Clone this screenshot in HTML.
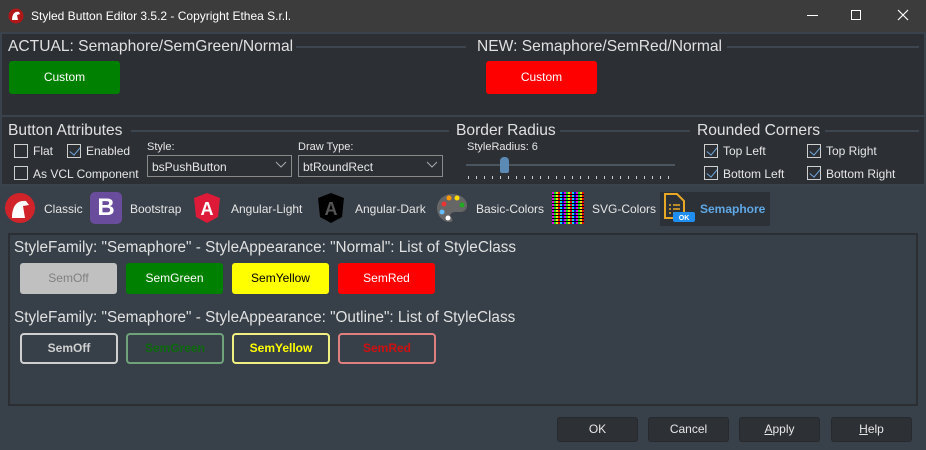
<!DOCTYPE html>
<html><head><meta charset="utf-8"><style>
*{margin:0;padding:0;box-sizing:border-box}
body{width:926px;height:450px;background:#384049;font-family:"Liberation Sans",sans-serif;color:#e6e6e6;position:relative;overflow:hidden;font-size:12px}
.a{position:absolute}
.title{left:0;top:0;width:926px;height:32px;background:#3c3c3c;color:#fff;font-size:12px}
.top{left:0;top:32px;width:926px;height:154px;background:#2c2f34;border:2px solid #3a424b;border-top:none}
.hd{font-size:15.6px;color:#e0e0e0;white-space:nowrap}
.line{height:2px;background:#3d454e}
.btn{border-radius:3px;text-align:center;font-size:12px}
.cb{width:14px;height:14px;border:1px solid #d0d0d0}
.cb.on::after{content:"";position:absolute;left:4px;top:0px;width:5px;height:9px;border:solid #6fa8dc;border-width:0 1.5px 1.5px 0;transform:rotate(40deg)}
.lbl{font-size:12px;color:#e6e6e6;white-space:nowrap}
.combo{height:22px;border:1px solid #8a8a8a;background:#2c2f34;font-size:12px;padding:4px 4px}
.tab{font-size:12px;color:#e6e6e6}
.panel{left:8px;top:233px;width:910px;height:173px;background:#374049;border:2px solid #2b2f34}
.ob{height:31px;border-radius:4px;border:2px solid;text-align:center;line-height:27px;font-weight:bold;font-size:12px;background:#374049}
.nb{height:31px;border-radius:3px;text-align:center;line-height:31px;font-size:12px}
.bb{top:417px;height:25px;width:81px;background:#2d3035;border:1px solid #262a2e;border-radius:3px;text-align:center;line-height:23px;font-size:12px}
</style></head><body>
<div class="a title">
 <svg class="a" style="left:8px;top:8px" width="16" height="16"><circle cx="8" cy="8" r="7.5" fill="#b01818"/><path d="M4 12 C4 6 7 3 11 4 L12 6 L9 7 L10 12 Z" fill="#fff"/></svg>
 <span class="a" style="left:31px;top:9px">Styled Button Editor 3.5.2 - Copyright Ethea S.r.l.</span>
 <div class="a" style="left:807px;top:15px;width:11px;height:1px;background:#fff"></div>
 <div class="a" style="left:851px;top:10px;width:10px;height:10px;border:1px solid #fff"></div>
 <svg class="a" style="left:897px;top:9px" width="12" height="12"><path d="M1 1L11 11M11 1L1 11" stroke="#fff" stroke-width="1.2"/></svg>
</div>
<div class="a top"></div>
<div class="a line" style="left:2px;top:32px;width:922px;background:#3a424b"></div>
<div class="a hd" style="left:8px;top:38px">ACTUAL: Semaphore/SemGreen/Normal</div>
<div class="a line" style="left:296px;top:46px;width:170px"></div>
<div class="a hd" style="left:477px;top:38px">NEW: Semaphore/SemRed/Normal</div>
<div class="a line" style="left:727px;top:46px;width:192px"></div>
<div class="a btn" style="left:9px;top:61px;width:111px;height:33px;background:#008000;line-height:33px;color:#fff">Custom</div>
<div class="a btn" style="left:486px;top:61px;width:111px;height:33px;background:#ff0000;line-height:33px;color:#fff">Custom</div>
<div class="a line" style="left:2px;top:115px;width:922px;background:#3a424b"></div>
<div class="a hd" style="left:8px;top:122px">Button Attributes</div>
<div class="a line" style="left:131px;top:130px;width:318px"></div>
<div class="a hd" style="left:456px;top:122px">Border Radius</div>
<div class="a line" style="left:560px;top:130px;width:130px"></div>
<div class="a hd" style="left:697px;top:122px">Rounded Corners</div>
<div class="a line" style="left:825px;top:130px;width:94px"></div>
<div class="a cb" style="left:14px;top:144px"></div><span class="a lbl" style="left:33px;top:144px">Flat</span>
<div class="a cb on" style="left:67px;top:144px"></div><span class="a lbl" style="left:86px;top:144px">Enabled</span>
<div class="a cb" style="left:14px;top:166px"></div><span class="a lbl" style="left:33px;top:167px">As VCL Component</span>
<span class="a lbl" style="left:147px;top:141px;font-size:11px">Style:</span>
<div class="a combo" style="left:147px;top:155px;width:145px">bsPushButton</div>
<span class="a lbl" style="left:298px;top:141px;font-size:11px">Draw Type:</span>
<div class="a combo" style="left:298px;top:155px;width:145px">btRoundRect</div>
<svg class="a" style="left:275px;top:161px" width="12" height="8"><path d="M1 1L6 6L11 1" stroke="#aaa" fill="none"/></svg>
<svg class="a" style="left:426px;top:161px" width="12" height="8"><path d="M1 1L6 6L11 1" stroke="#aaa" fill="none"/></svg>
<span class="a lbl" style="left:467px;top:141px;font-size:11px">StyleRadius: 6</span>
<div class="a" style="left:466px;top:164px;width:209px;height:2px;background:#4b5560"></div>
<div class="a" style="left:500px;top:157px;width:9px;height:16px;background:#5b8ab5;border-radius:4px 4px 2px 2px"></div>
<div class="a" style="left:468px;top:176px;width:208px;height:3px;background:repeating-linear-gradient(90deg,#ccc 0 1px,transparent 1px 8px)"></div>
<div class="a cb on" style="left:704px;top:144px"></div><span class="a lbl" style="left:723px;top:144px">Top Left</span>
<div class="a cb on" style="left:807px;top:144px"></div><span class="a lbl" style="left:826px;top:144px">Top Right</span>
<div class="a cb on" style="left:704px;top:166px"></div><span class="a lbl" style="left:723px;top:167px">Bottom Left</span>
<div class="a cb on" style="left:807px;top:166px"></div><span class="a lbl" style="left:826px;top:167px">Bottom Right</span>
<!-- tabs -->
<div class="a" style="left:660px;top:192px;width:110px;height:34px;background:#2c3137"></div>
<svg class="a" style="left:4px;top:192px" width="32" height="32"><circle cx="16" cy="16" r="15" fill="#d0232a"/><path d="M8 26C8 14 13 8 22 9L25 13L19 14L21 26Z" fill="#fff"/></svg>
<span class="a tab" style="left:44px;top:202px">Classic</span>
<div class="a" style="left:90px;top:192px;width:32px;height:32px;background:#6a4c9c;border-radius:5px;color:#fff;font-weight:bold;font-size:24px;text-align:center;line-height:32px">B</div>
<span class="a tab" style="left:130px;top:202px">Bootstrap</span>
<svg class="a" style="left:193px;top:192px" width="28" height="32"><path d="M14 1L27 6L25 25L14 31L3 25L1 6Z" fill="#dd1b38"/><text x="14" y="23" font-size="18" fill="#fff" text-anchor="middle" font-family="Liberation Sans" font-weight="bold">A</text></svg>
<span class="a tab" style="left:231px;top:202px">Angular-Light</span>
<svg class="a" style="left:317px;top:192px" width="28" height="32"><path d="M14 1L27 6L25 25L14 31L3 25L1 6Z" fill="#000"/><text x="14" y="23" font-size="18" fill="#555" text-anchor="middle" font-family="Liberation Sans" font-weight="bold">A</text></svg>
<span class="a tab" style="left:355px;top:202px">Angular-Dark</span>
<svg class="a" style="left:436px;top:192px" width="32" height="32"><path d="M16 2C7 2 1 9 1 16c0 8 6 14 13 14 3 0 3-3 1-5-2-3 1-5 4-5h5c5 0 7-3 7-7C31 7 24 2 16 2Z" fill="#666"/><circle cx="8" cy="12" r="2.5" fill="#e33"/><circle cx="13" cy="6" r="2.5" fill="#f90"/><circle cx="21" cy="6" r="2.5" fill="#fd0"/><circle cx="26" cy="13" r="2.5" fill="#2a2"/><circle cx="6" cy="20" r="2.5" fill="#6bf"/><circle cx="12" cy="26" r="2.5" fill="#fff"/></svg>
<span class="a tab" style="left:476px;top:202px">Basic-Colors</span>
<div class="a" style="left:552px;top:192px;width:32px;height:32px;background:repeating-linear-gradient(90deg,#f0f 0 2px,#0f0 2px 4px,#ff0 4px 6px,#f00 6px 8px,#0ff 8px 10px,#00f 10px 12px),#000;opacity:.85"></div>
<div class="a" style="left:552px;top:192px;width:32px;height:32px;background:repeating-linear-gradient(0deg,transparent 0 2px,#000 2px 3px)"></div>
<span class="a tab" style="left:592px;top:202px">SVG-Colors</span>
<svg class="a" style="left:662px;top:192px" width="34" height="32"><path d="M3 2H15L22 9V26H3Z" fill="none" stroke="#e8a825" stroke-width="2"/><path d="M7 13h2M11 13h7M7 17h2M11 17h7M7 21h2M11 21h7" stroke="#e8a825" stroke-width="1.6"/><rect x="11" y="20" width="22" height="10" rx="2" fill="#1e8ef0"/><text x="22" y="28" font-size="7" fill="#fff" text-anchor="middle" font-family="Liberation Sans" font-weight="bold">OK</text></svg>
<span class="a tab" style="left:700px;top:202px;color:#5fa8e6;font-weight:bold">Semaphore</span>
<!-- panel -->
<div class="a panel"></div>
<div class="a hd" style="left:14px;top:239px;font-size:15.3px">StyleFamily: "Semaphore" - StyleAppearance: "Normal": List of StyleClass</div>
<div class="a nb" style="left:20px;top:263px;width:97px;background:#c0c0c0;color:#808080">SemOff</div>
<div class="a nb" style="left:126px;top:263px;width:97px;background:#008000;color:#fff">SemGreen</div>
<div class="a nb" style="left:232px;top:263px;width:97px;background:#ffff00;color:#000">SemYellow</div>
<div class="a nb" style="left:338px;top:263px;width:97px;background:#ff0000;color:#fff">SemRed</div>
<div class="a hd" style="left:14px;top:309px;font-size:15.3px">StyleFamily: "Semaphore" - StyleAppearance: "Outline": List of StyleClass</div>
<div class="a ob" style="left:20px;top:333px;width:98px;border-color:#d0d0d0;color:#d0d0d0">SemOff</div>
<div class="a ob" style="left:126px;top:333px;width:98px;border-color:#6fa37a;color:#0c6a0c">SemGreen</div>
<div class="a ob" style="left:232px;top:333px;width:98px;border-color:#f0f080;color:#ffff00">SemYellow</div>
<div class="a ob" style="left:338px;top:333px;width:98px;border-color:#e07f80;color:#d01010">SemRed</div>
<div class="a bb" style="left:557px">OK</div>
<div class="a bb" style="left:648px">Cancel</div>
<div class="a bb" style="left:739px"><u>A</u>pply</div>
<div class="a bb" style="left:831px"><u>H</u>elp</div>
</body></html>
